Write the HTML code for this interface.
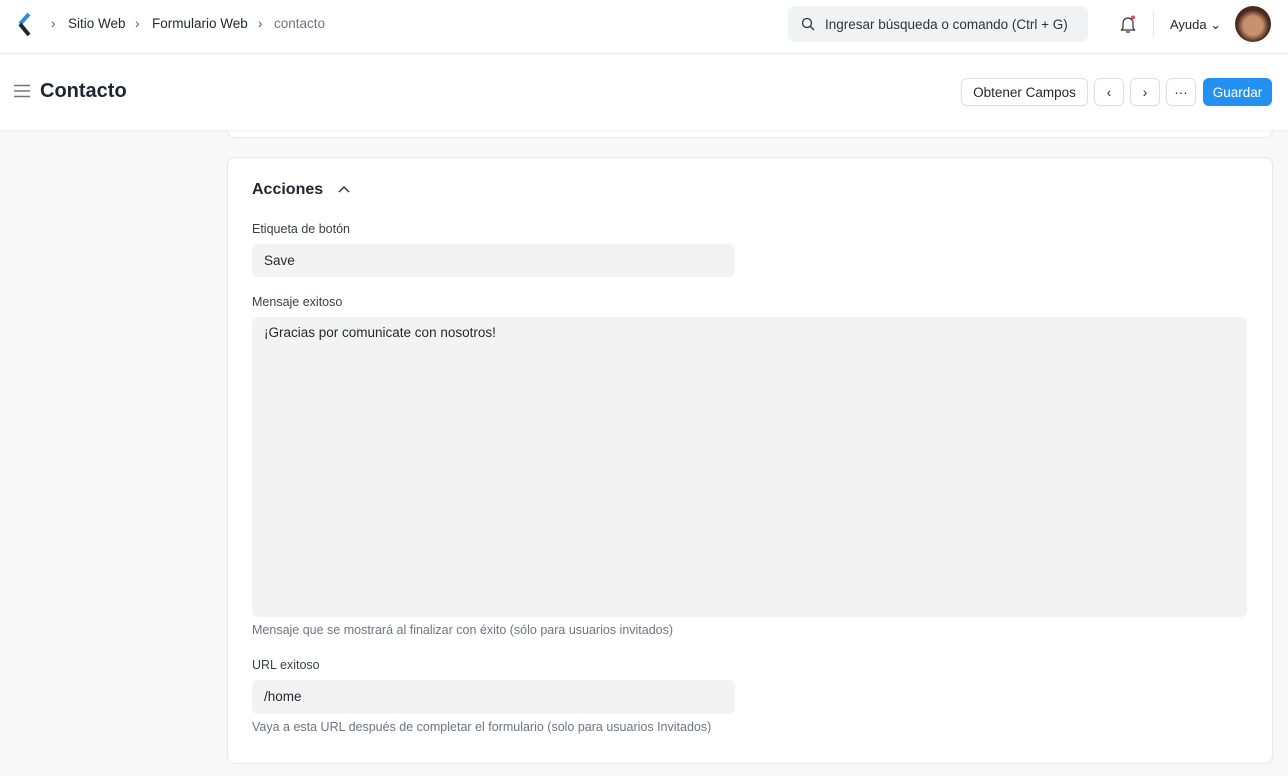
<!DOCTYPE html>
<html><head><meta charset="utf-8"><style>
*{box-sizing:border-box;margin:0;padding:0}
body{width:1288px;height:776px;overflow:hidden;background:#f8f8f8;font-family:"Liberation Sans",sans-serif;color:#1f272e;position:relative}
.nav{position:absolute;top:0;left:0;width:1288px;height:54px;background:#fff;border-bottom:1px solid #ebeef0;z-index:3}
.ph{position:absolute;top:55px;left:0;width:1288px;height:75px;background:#fff;box-shadow:0 1px 2px rgba(0,0,0,.06);z-index:2}
.t{position:absolute;white-space:nowrap}
.card{position:absolute;background:#fff;border:1px solid #e6e8ea;border-radius:8px}
.in{position:absolute;background:#f3f3f4;border-radius:6px;font-size:13.5px;padding-left:12px}
.lbl{font-size:12.5px;color:#383f45}
.help{font-size:12.5px;color:#6c7680}
.btn{position:absolute;top:78px;height:28px;border:1px solid #dde0e3;border-radius:6px;background:#fff;font-size:13.5px;display:flex;align-items:center;justify-content:center;box-shadow:0 1px 2px rgba(0,0,0,.05);z-index:4}
</style></head><body>
<div class="nav">
<svg style="position:absolute;left:17px;top:12px" width="16" height="26" viewBox="0 0 16 26"><path d="M12 2 L3 12" stroke="#2d8fd5" stroke-width="4"/><path d="M3 12 L12 23" stroke="#1f272e" stroke-width="4"/></svg>
<div class="t" style="left:51px;top:16px;font-size:13.5px;color:#555">›</div>
<div class="t" style="left:68px;top:16px;font-size:13.5px">Sitio Web</div>
<div class="t" style="left:135px;top:16px;font-size:13.5px;color:#555">›</div>
<div class="t" style="left:152px;top:16px;font-size:13.5px">Formulario Web</div>
<div class="t" style="left:258px;top:16px;font-size:13.5px;color:#555">›</div>
<div class="t" style="left:274px;top:16px;font-size:13.5px;color:#6c7680">contacto</div>
<div style="position:absolute;left:788px;top:6px;width:300px;height:36px;background:#f1f2f3;border-radius:7px"></div>
<svg style="position:absolute;left:801px;top:17px" width="14" height="14" viewBox="0 0 14 14"><circle cx="6" cy="6" r="4.5" fill="none" stroke="#333" stroke-width="1.3"/><path d="M9.5 9.5L13 13" stroke="#333" stroke-width="1.3"/></svg>
<div class="t" style="left:825px;top:17px;font-size:13.5px;color:#333">Ingresar búsqueda o comando (Ctrl + G)</div>
<svg style="position:absolute;left:1119px;top:14px" width="18" height="20" viewBox="0 0 18 20"><path d="M4 14V9a5 5 0 0 1 10 0v5l1.5 2h-13z M7 18h4" fill="none" stroke="#333" stroke-width="1.2"/><circle cx="14" cy="3.5" r="2" fill="#e24c4c"/></svg>
<div style="position:absolute;left:1153px;top:12px;width:1px;height:24px;background:#e2e4e6"></div>
<div class="t" style="left:1170px;top:17px;font-size:13px">Ayuda ⌄</div>
<div style="position:absolute;left:1235px;top:6px;width:36px;height:36px;border-radius:50%;background:radial-gradient(circle at 50% 55%,#c9906f 0 35%,#4a2a1c 60%)"></div>
</div>
<div class="ph">
<svg style="position:absolute;left:14px;top:29px" width="16" height="14"><path d="M0 1.5h16M0 7h16M0 12.5h16" stroke="#6c7680" stroke-width="1.5"/></svg>
<div class="t" style="left:40px;top:25px;font-size:20px;font-weight:bold">Contacto</div>
</div>
<div class="btn" style="left:961px;width:127px">Obtener Campos</div>
<div class="btn" style="left:1094px;width:30px">‹</div>
<div class="btn" style="left:1130px;width:30px">›</div>
<div class="btn" style="left:1166px;width:30px">···</div>
<div class="btn" style="left:1203px;width:69px;background:#2490ef;border-color:#2490ef;color:#fff">Guardar</div>
<div class="card" style="left:227px;top:100px;width:1046px;height:38px"></div>
<div class="card" style="left:227px;top:157px;width:1046px;height:607px"></div>
<div class="t" style="left:252px;top:181px;font-size:16px;font-weight:bold">Acciones</div>
<svg style="position:absolute;left:338px;top:185px" width="12" height="10"><path d="M1 7l5-5 5 5" fill="none" stroke="#333" stroke-width="1.4"/></svg>
<div class="t lbl" style="left:252px;top:222px">Etiqueta de botón</div>
<div class="in" style="left:252px;top:244px;width:483px;height:33px;line-height:33px">Save</div>
<div class="t lbl" style="left:252px;top:295px">Mensaje exitoso</div>
<div class="in" style="left:252px;top:317px;width:995px;height:300px;padding-top:8px">¡Gracias por comunicate con nosotros!</div>
<div class="t help" style="left:252px;top:623px">Mensaje que se mostrará al finalizar con éxito (sólo para usuarios invitados)</div>
<div class="t lbl" style="left:252px;top:658px">URL exitoso</div>
<div class="in" style="left:252px;top:680px;width:483px;height:34px;line-height:34px">/home</div>
<div class="t help" style="left:252px;top:720px">Vaya a esta URL después de completar el formulario (solo para usuarios Invitados)</div>
</body></html>
